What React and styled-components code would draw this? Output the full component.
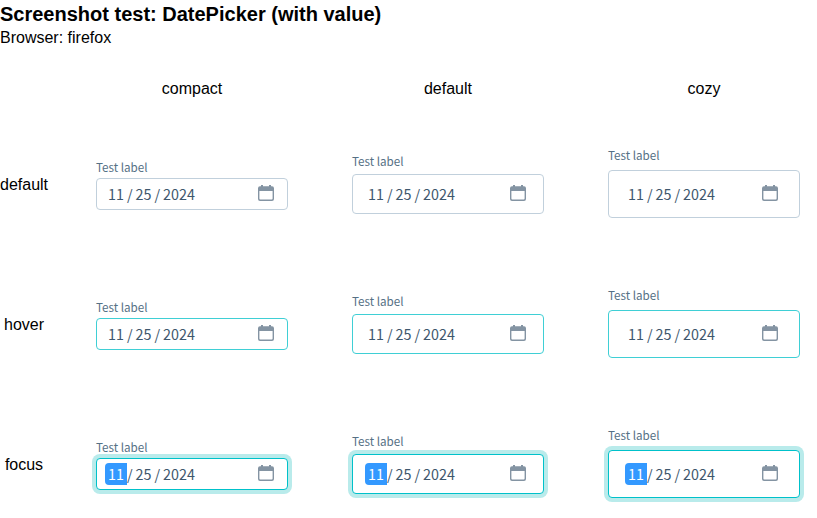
import React from "react";
import styled, { createGlobalStyle } from "styled-components";

const GlobalStyle = createGlobalStyle`
  body {
    margin: 0;
    overflow: hidden;
    background: #fff;
    color: #000;
    font: 16px/18px "Liberation Sans", Arial, sans-serif;
  }
`;

const Title = styled.h1`
  margin: 0;
  padding-top: 2px;
  font-size: 20px;
  line-height: 24px;
  height: 26px;
  font-weight: 700;
`;

const Browser = styled.div`
  height: 17px;
  line-height: 19px;
`;

const Matrix = styled.div`
  display: grid;
  width: 816px;
  grid-template-columns: 48px repeat(3, 256px);
  grid-template-rows: 70px repeat(3, 140px);
  align-items: center;
`;

const Heading = styled.div`
  padding-left: 32px;
  padding-top: 18px;
  text-align: center;
`;

const RowName = styled.div`
  text-align: center;
`;

const Cell = styled.div`
  padding: 0 16px 2px 48px;
  width: 192px;
`;

const sizes = {
  compact: { line: 18, height: 32, left: 8, right: 13 },
  default: { line: 14, height: 40, left: 12, right: 17 },
  cozy: { line: 10, height: 48, left: 16, right: 21 },
};

const borders = { default: "#c1d0dc", hover: "#3fcfd5", focus: "#00c1ca" };

const Label = styled.div`
  height: 20px;
  font: 11.65px "Noto Sans CJK SC", sans-serif;
  line-height: ${(p) => sizes[p.$size].line}px;
  color: #557085;
`;

const Field = styled.div`
  box-sizing: border-box;
  display: flex;
  align-items: center;
  justify-content: space-between;
  height: ${(p) => sizes[p.$size].height}px;
  padding: 0 ${(p) => sizes[p.$size].right}px 0 ${(p) => sizes[p.$size].left}px;
  border: 1px solid ${(p) => borders[p.$state]};
  border-radius: 4px;
  background: #fff;
  box-shadow: ${(p) => (p.$state === "focus" ? "0 0 0 4px #b9ebeb" : "none")};
`;

const DateText = styled.div`
  display: flex;
  font: 14.35px/22px "Noto Sans CJK SC", sans-serif;
  color: #3e576d;
`;

const Segment = styled.span`
  padding: 0 3px;
  border-radius: 4px 0 0 4px;
  color: ${(p) => (p.$selected ? "#fff" : "inherit")};
  background: ${(p) => (p.$selected ? "#3399ff" : "transparent")};
`;

const Icon = styled.svg`
  display: block;
  margin-bottom: 2px;
`;

function CalendarIcon() {
  return (
    <Icon width="16" height="16" viewBox="0 0 16 16" fill="#8494a3">
      <path
        fillRule="evenodd"
        d="M3 0h2v1.3h6V0h2v1.3h1a2 2 0 0 1 2 2V14a2 2 0 0 1-2 2H2a2 2 0 0 1-2-2V3.3a2 2 0 0 1 2-2h1zM1.4 6.1v7.5a1 1 0 0 0 1 1h11.2a1 1 0 0 0 1-1V6.1z"
      />
    </Icon>
  );
}

function DatePicker({ size, state }) {
  return (
    <Cell>
      <Label $size={size}>Test label</Label>
      <Field $size={size} $state={state}>
        <DateText>
          <Segment $selected={state === "focus"}>11</Segment>/
          <Segment>25</Segment>/<Segment>2024</Segment>
        </DateText>
        <CalendarIcon />
      </Field>
    </Cell>
  );
}

const densities = ["compact", "default", "cozy"];
const states = ["default", "hover", "focus"];

export default function App() {
  return (
    <>
      <GlobalStyle />
      <Title>Screenshot test: DatePicker (with value)</Title>
      <Browser>Browser: firefox</Browser>
      <Matrix>
        <div />
        {densities.map((d) => (
          <Heading key={d}>{d}</Heading>
        ))}
        {states.map((s) => (
          <React.Fragment key={s}>
            <RowName>{s}</RowName>
            {densities.map((d) => (
              <DatePicker key={d} size={d} state={s} />
            ))}
          </React.Fragment>
        ))}
      </Matrix>
    </>
  );
}
